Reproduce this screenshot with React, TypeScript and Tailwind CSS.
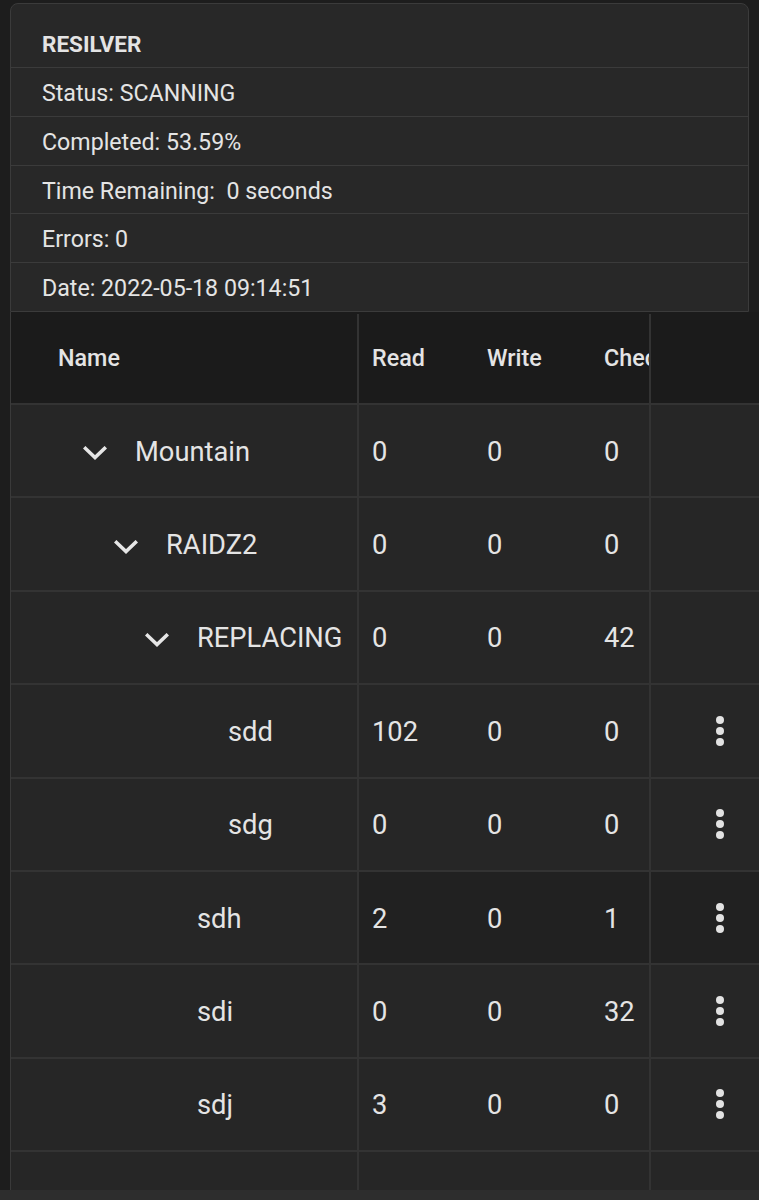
import React from "react";

type Row = {
  name: string;
  level: number;
  expandable?: boolean;
  read: string;
  write: string;
  check: string;
  menu?: boolean;
  dim?: boolean;
};

const rows: Row[] = [
  { name: "Mountain", level: 0, expandable: true, read: "0", write: "0", check: "0" },
  { name: "RAIDZ2", level: 1, expandable: true, read: "0", write: "0", check: "0" },
  { name: "REPLACING", level: 2, expandable: true, read: "0", write: "0", check: "42" },
  { name: "sdd", level: 3, read: "102", write: "0", check: "0", menu: true },
  { name: "sdg", level: 3, read: "0", write: "0", check: "0", menu: true },
  { name: "sdh", level: 2, read: "2", write: "0", check: "1", menu: true, dim: true },
  { name: "sdi", level: 2, read: "0", write: "0", check: "32", menu: true },
  { name: "sdj", level: 2, read: "3", write: "0", check: "0", menu: true },
];

const indent = ["pl-[72px]", "pl-[103px]", "pl-[134px]", "pl-[165px]"];

const info = [
  "Status: SCANNING",
  "Completed: 53.59%",
  "Time Remaining:\u00a0 0 seconds",
  "Errors: 0",
  "Date: 2022-05-18 09:14:51",
];

function Chevron() {
  return (
    <svg width="24" height="14" viewBox="0 0 24 14" fill="none" className="mt-[2px]">
      <polyline
        points="2.5,2.5 12,11.5 21.5,2.5"
        stroke="#e6e6e6"
        strokeWidth="3.6"
        strokeLinecap="square"
      />
    </svg>
  );
}

function Kebab() {
  return (
    <div className="flex flex-col items-center gap-[3px]">
      <span className="w-[8px] h-[8px] rounded-full bg-[#e2e2e2]" />
      <span className="w-[8px] h-[8px] rounded-full bg-[#e2e2e2]" />
      <span className="w-[8px] h-[8px] rounded-full bg-[#e2e2e2]" />
    </div>
  );
}

export default function App() {
  return (
    <div className="w-[759px] h-[1200px] overflow-hidden flex flex-col bg-[#1d1d1d] text-[#e4e4e4] font-['Roboto','Liberation_Sans',sans-serif]">
      {/* resilver card */}
      <div className="pt-[3px] pl-[10px] pr-[10px]">
        <div className="rounded-t-[8px] border border-[#3b3b3b] bg-[#282828]">
          <div className="h-[63px] flex items-center pt-[18px] pl-[31px] text-[22.5px] font-bold">
            RESILVER
          </div>
          {info.map((t) => (
            <div
              key={t}
              className="h-[48.8px] flex items-center pt-[3px] pl-[31px] border-t border-[#3b3b3b] text-[23.2px] whitespace-pre"
            >
              {t}
            </div>
          ))}
        </div>
      </div>

      {/* pool table */}
      <div className="flex-1 ml-[10px] border-l border-[#3a3a3a] overflow-hidden">
        <div className="h-[93px] flex bg-[#1b1b1b] border-b-2 border-[#333333] pt-[2px] text-[23.3px] font-medium">
          <div className="w-[348px] border-r-2 border-[#333333] flex items-center pl-[47px]">Name</div>
          <div className="w-[114px] flex items-center pl-[13px]">Read</div>
          <div className="w-[117px] flex items-center pl-[14px]">Write</div>
          <div className="w-[61px] border-r-2 border-[#333333] flex items-center pl-[14px] overflow-hidden whitespace-nowrap">
            Checksum
          </div>
          <div className="flex-1" />
        </div>

        {rows.map((r) => (
          <div key={r.name} className="h-[93.4px] flex bg-[#262626] border-b-2 border-[#333333] text-[27.3px]">
            <div className={`w-[348px] border-r-2 border-[#333333] flex items-center pt-[3px] ${indent[r.level]}`}>
              <div className="w-[52px] flex items-center">{r.expandable && <Chevron />}</div>
              <span>{r.name}</span>
            </div>
            <div className={`flex-1 flex ${r.dim ? "bg-[#212121]" : ""}`}>
              <div className="w-[114px] flex items-center pt-[3px] pl-[13px]">{r.read}</div>
              <div className="w-[117px] flex items-center pt-[3px] pl-[14px]">{r.write}</div>
              <div className="w-[61px] border-r-2 border-[#333333] flex items-center pt-[3px] pl-[14px]">{r.check}</div>
              <div className="flex-1 flex items-center pl-[65px]">{r.menu && <Kebab />}</div>
            </div>
          </div>
        ))}

        <div className="h-[60px] flex bg-[#262626]">
          <div className="w-[348px] border-r-2 border-[#333333]" />
          <div className="w-[114px]" />
          <div className="w-[117px]" />
          <div className="w-[61px] border-r-2 border-[#333333]" />
          <div className="flex-1" />
        </div>
      </div>

      <div className="h-[10px] bg-[#2d2d2d]" />
    </div>
  );
}
